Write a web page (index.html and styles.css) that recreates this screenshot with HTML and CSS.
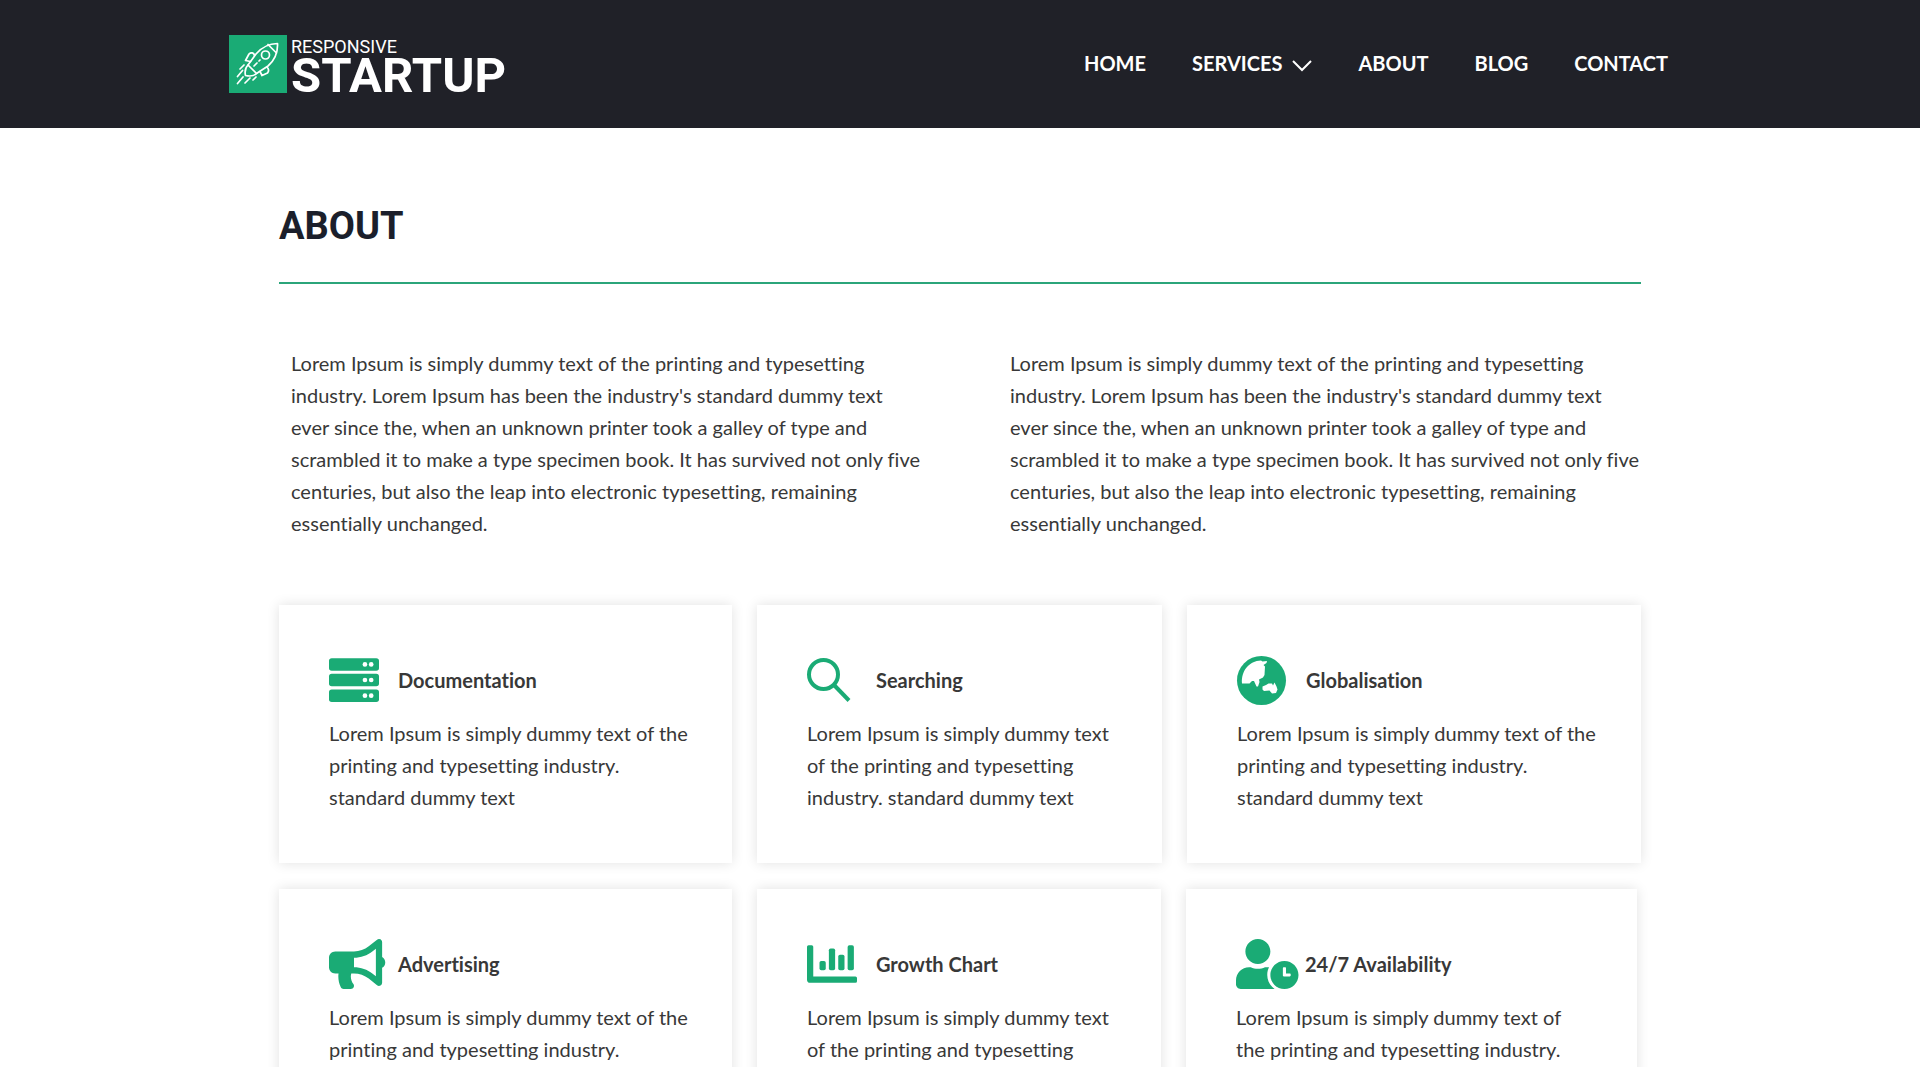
FILE: index.html
```html
<!DOCTYPE html>
<html lang="en">
<head>
    <meta charset="utf-8">
    <meta name="viewport" content="width=device-width, initial-scale=1">
    <title>About | Responsive Startup</title>
    <link rel="stylesheet" href="styles.css">
</head>
<body>
    <header class="header">
        <div class="container header-inner">
            <a href="#" class="logo">
                <svg class="logo-mark" viewBox="0 0 58 58" fill="none" stroke="#fff" stroke-width="1.7" stroke-linecap="round" stroke-linejoin="round">
                    <path d="M48.500 8.500C40 8.500 33 12 27 19L19 30L27.500 38.500L39 31C46 25 49 18 48.500 8.500Z"/>
                    <path d="M39 9.500L47.500 18"/>
                    <circle cx="36.500" cy="20" r="4"/>
                    <path d="M25.500 20.500C25 17.500 22 17 20 19L16.500 25.500L21.500 26.500"/>
                    <path d="M38 32C40 34 40 36 38.500 38L33 40.500L31 36.500"/>
                    <path d="M19 30C16 33 15.500 36 16.500 40.500C21 41.500 25 41 27.500 38.500"/>
                    <path d="M30 26L31 25M25 31L28 28"/>
                    <path d="M15 30L11 34M13.500 35.500L8.500 41.500M14 42L8.500 48.500M21 43L16 48M27 42L24 45"/>
                </svg>
                <span class="logo-text">
                    <span class="logo-small">RESPONSIVE</span>
                    <span class="logo-big">STARTUP</span>
                </span>
            </a>
            <nav class="nav">
                <a href="#">HOME</a>
                <a href="#">SERVICES
                    <svg class="chevron" viewBox="0 0 20 12" fill="none" stroke="#fff" stroke-width="2"><path d="M1 1L10 10L19 1"/></svg>
                </a>
                <a href="#">ABOUT</a>
                <a href="#">BLOG</a>
                <a href="#">CONTACT</a>
            </nav>
        </div>
    </header>

    <main class="container main">
        <h1>ABOUT</h1>

        <section class="intro">
            <p>Lorem Ipsum is simply dummy text of the printing and typesetting industry. Lorem Ipsum has been the industry's standard dummy text ever since the, when an unknown printer took a galley of type and scrambled it to make a type specimen book. It has survived not only five centuries, but also the leap into electronic typesetting, remaining essentially unchanged.</p>
            <p>Lorem Ipsum is simply dummy text of the printing and typesetting industry. Lorem Ipsum has been the industry's standard dummy text ever since the, when an unknown printer took a galley of type and scrambled it to make a type specimen book. It has survived not only five centuries, but also the leap into electronic typesetting, remaining essentially unchanged.</p>
        </section>

        <section class="cards">
            <article class="card">
                <div class="card-head">
                    <svg class="icon" viewBox="0 0 512 512">
                        <rect y="32" width="512" height="128" rx="28"/>
                        <rect y="192" width="512" height="128" rx="28"/>
                        <rect y="352" width="512" height="128" rx="28"/>
                        <g fill="#fff">
                            <circle cx="368" cy="96" r="24"/><circle cx="432" cy="96" r="24"/>
                            <circle cx="368" cy="256" r="24"/><circle cx="432" cy="256" r="24"/>
                            <circle cx="368" cy="416" r="24"/><circle cx="432" cy="416" r="24"/>
                        </g>
                    </svg>
                    <h2>Documentation</h2>
                </div>
                <p>Lorem Ipsum is simply dummy text of the printing and typesetting industry. standard dummy text</p>
            </article>
            <article class="card">
                <div class="card-head">
                    <svg class="icon icon-line" viewBox="0 0 50 50">
                        <circle cx="16.500" cy="19.500" r="14.500"/>
                        <path d="M27 30L42 45.500"/>
                    </svg>
                    <h2>Searching</h2>
                </div>
                <p>Lorem Ipsum is simply dummy text of the printing and typesetting industry. standard dummy text</p>
            </article>
            <article class="card">
                <div class="card-head">
                    <svg class="icon" viewBox="0 0 50 50">
                        <circle cx="24.500" cy="25.500" r="24.500"/>
                        <path fill="#fff" d="M24 5.500L25.500 6.500L30 6L29.500 8L26.500 10L28 11.500L27.500 20L26 22.500L22 24.500L22.500 27L21 31.500L19.500 31.500L17 26L15 26L12.500 28.500H5C4 16 12 6 24 5.500Z"/>
                        <path fill="#fff" d="M25.500 31.500L29 30L31.500 28.500L35 28.500L36 30.500L37.500 27.500L39.500 31.500L40.500 34.500L39 38L35 38.500L32.500 35.500L27 36L25.500 34.500Z"/>
                    </svg>
                    <h2>Globalisation</h2>
                </div>
                <p>Lorem Ipsum is simply dummy text of the printing and typesetting industry. standard dummy text</p>
            </article>
        </section>

        <section class="cards cards-last">
            <article class="card">
                <div class="card-head">
                    <svg class="icon" viewBox="0 0 512 512">
                        <path d="M576 240c0-23.630-12.950-44.040-32-55.120V32.010C544 23.260 537.020 0 512 0c-7.120 0-14.190 2.380-19.980 7.020l-85.030 68.030C364.280 109.190 310.660 128 256 128H64c-35.350 0-64 28.650-64 64v96c0 35.350 28.650 64 64 64h33.700c-1.390 10.480-2.180 21.140-2.180 32 0 39.770 9.260 77.350 25.560 110.940 5.190 10.690 16.520 17.060 28.400 17.060h74.280c26.050 0 41.690-29.840 25.900-50.560-16.400-21.520-26.150-48.360-26.150-77.440 0-11.110 1.620-21.790 4.410-32H256c54.660 0 108.280 18.810 150.980 52.950l85.030 68.030a32.023 32.023 0 0 0 19.980 7.020c24.920 0 32-22.780 32-32V295.130C563.050 284.040 576 263.630 576 240zm-96 141.420l-33.050-26.440C392.950 311.780 325.120 288 256 288v-96c69.120 0 136.950-23.780 190.950-66.980L480 98.580v282.840z"/>
                    </svg>
                    <h2>Advertising</h2>
                </div>
                <p>Lorem Ipsum is simply dummy text of the printing and typesetting industry. standard dummy text</p>
            </article>
            <article class="card">
                <div class="card-head">
                    <svg class="icon" viewBox="0 0 512 512">
                        <path d="M16 64h32q16 0 16 16v304h432q16 0 16 16v32q0 16-16 16H32q-32 0-32-32V80q0-16 16-16z"/>
                        <rect x="128" y="224" width="64" height="96" rx="18"/>
                        <rect x="224" y="96" width="64" height="224" rx="18"/>
                        <rect x="320" y="160" width="64" height="160" rx="18"/>
                        <rect x="416" y="64" width="64" height="256" rx="18"/>
                    </svg>
                    <h2>Growth Chart</h2>
                </div>
                <p>Lorem Ipsum is simply dummy text of the printing and typesetting industry. standard dummy text</p>
            </article>
            <article class="card">
                <div class="card-head">
                    <svg class="icon" viewBox="0 0 512 512">
                        <path d="M496 224c-79.600 0-144 64.400-144 144s64.400 144 144 144 144-64.400 144-144-64.400-144-144-144zm64 150.300c0 5.300-4.400 9.700-9.700 9.700h-60.600c-5.300 0-9.700-4.400-9.700-9.700v-76.600c0-5.300 4.400-9.700 9.700-9.700h12.600c5.300 0 9.700 4.400 9.700 9.700V352h38.300c5.300 0 9.700 4.400 9.700 9.700v12.600zM320 368c0-27.800 6.700-54.100 18.200-77.500-8-1.500-16.200-2.500-24.600-2.500h-16.700c-22.200 10.200-46.900 16-72.900 16s-50.600-5.800-72.900-16h-16.700C60.200 288 0 348.200 0 422.400V464c0 26.500 21.500 48 48 48h347.100c-45.300-31.900-75.100-84.500-75.100-144zm-96-112c70.700 0 128-57.300 128-128S294.700 0 224 0 96 57.300 96 128s57.300 128 128 128z"/>
                    </svg>
                    <h2>24/7 Availability</h2>
                </div>
                <p>Lorem Ipsum is simply dummy text of the printing and typesetting industry. standard dummy text</p>
            </article>
        </section>
    </main>
</body>
</html>
```
FILE: styles.css
```css
* {
    box-sizing: border-box;
    margin: 0;
    padding: 0;
}

body {
    font-family: Lato, sans-serif;
    font-size: 20px;
    font-variant-ligatures: none;
    line-height: 32px;
    color: #383838;
    background-color: #fff;
}

a {
    color: #fff;
    text-decoration: none;
}

.container {
    max-width: 1462px;
    margin: 0 auto;
}

/* header */
.header {
    background-color: #202128;
}

.header-inner {
    display: flex;
    justify-content: space-between;
    align-items: center;
    min-height: 128px;
}

.logo {
    display: flex;
    gap: 4px;
}

.logo-mark {
    width: 58px;
    height: 58px;
    background-color: #1aab75;
}

.logo-text {
    display: flex;
    flex-direction: column;
    font-family: Roboto, sans-serif;
}

.logo-small {
    font-size: 18px;
    line-height: 24px;
}

.logo-big {
    font-size: 49px;
    font-weight: 700;
    line-height: 34px;
}

.nav {
    display: flex;
    padding-bottom: 2px;
}

.nav a {
    display: flex;
    align-items: center;
    gap: 10px;
    padding: 0 23px;
    font-weight: 700;
}

.chevron {
    width: 20px;
    height: 12px;
    margin-top: 6px;
}

/* about page */
.main {
    padding: 72px 50px 50px;
}

h1 {
    padding-bottom: 30px;
    border-bottom: 2px solid #2ba57a;
    font-family: Roboto, sans-serif;
    font-size: 38px;
    line-height: 52px;
    color: #1b1f2b;
}

.intro {
    display: grid;
    grid-template-columns: 1fr 1fr;
    gap: 76px;
    padding: 63px 0 66px;
}

.intro p {
    padding-left: 12px;
}

.cards {
    display: grid;
    grid-template-columns: 453fr 405fr 454fr;
    gap: 25px;
    margin-bottom: 26px;
}

.cards-last {
    grid-template-columns: 453fr 404fr 451fr;
    margin-right: 4px;
}

.card {
    padding: 50px 40px 50px 50px;
    background-color: #fff;
    box-shadow: 0 0 12px rgba(0, 0, 0, 0.12);
}

.cards-last .card:last-child {
    padding-right: 50px;
}

.card-head {
    display: flex;
    align-items: center;
    gap: 19px;
    margin-bottom: 12px;
}

.icon {
    width: 50px;
    height: 50px;
    fill: #1aab75;
    overflow: visible;
}

.icon-line {
    fill: none;
    stroke: #1aab75;
    stroke-width: 4;
}

h2 {
    font-size: 20px;
    font-weight: 700;
}

@media screen and (max-width: 1100px) {
    .header-inner {
        flex-direction: column;
        justify-content: center;
    }

    .intro,
    .cards {
        grid-template-columns: 1fr;
    }
}
```
